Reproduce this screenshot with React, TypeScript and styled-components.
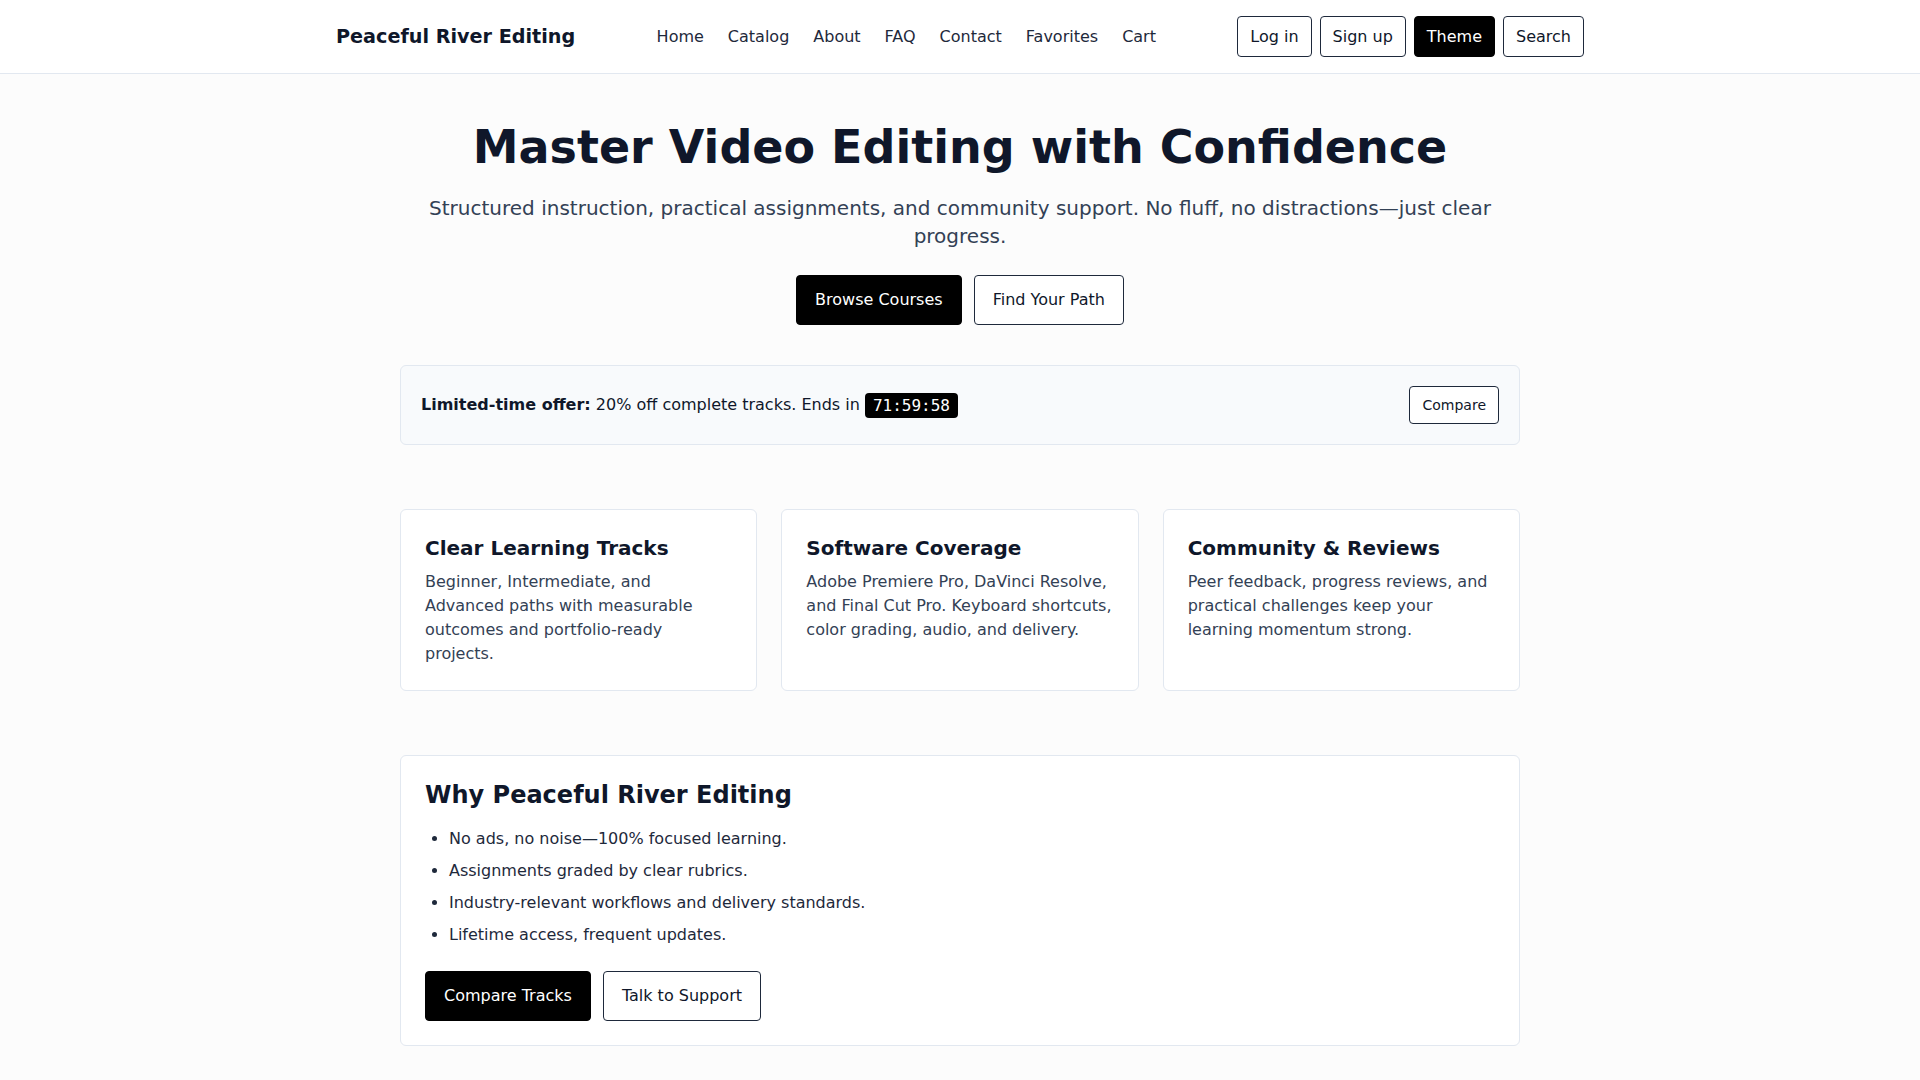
import React from "react";
import styled, { createGlobalStyle } from "styled-components";

const GlobalStyle = createGlobalStyle`
  * { box-sizing: border-box; }
  html, body { margin: 0; padding: 0; height: 100%; overflow: hidden; }
  body {
    background: #fcfcfc;
    color: #0f172a;
    font-family: "DejaVu Sans", "Noto Sans", sans-serif;
    font-size: 16px;
    line-height: 1.5;
  }
`;

const Page = styled.div`
  height: 100vh;
  overflow-y: scroll;
  background: #fcfcfc;

  &::-webkit-scrollbar {
    width: 15px;
    background: #f1f1f1;
  }
  &::-webkit-scrollbar-track {
    background: #f1f1f1;
  }
  &::-webkit-scrollbar-thumb {
    background: #c1c1c1;
    border: 2px solid #f1f1f1;
    border-radius: 0;
  }
  &::-webkit-scrollbar-button:single-button {
    display: block;
    height: 15px;
    background: #f1f1f1;
  }
`;

const Header = styled.header`
  background: #ffffff;
  border-bottom: 1px solid #e2e8f0;
`;

const HeaderInner = styled.div`
  max-width: 1280px;
  margin: 0 auto;
  padding: 16px 16px;
  display: flex;
  align-items: center;
  justify-content: space-between;
`;

const Logo = styled.a`
  font-size: 19.2px;
  font-weight: 700;
  color: #0f172a;
  text-decoration: none;
  line-height: 28px;
`;

const Nav = styled.nav`
  display: flex;
  align-items: center;
  gap: 24px;
`;

const NavLink = styled.a`
  color: #1e293b;
  text-decoration: none;
  font-size: 16px;
  line-height: 24px;
`;

const Actions = styled.div`
  display: flex;
  align-items: center;
  gap: 8px;
`;

const Button = styled.button<{ $primary?: boolean; $size?: "sm" | "md" | "lg" }>`
  font-family: inherit;
  font-size: ${(p) => (p.$size === "sm" ? "14px" : "16px")};
  line-height: ${(p) => (p.$size === "sm" ? "20px" : "24px")};
  padding: ${(p) =>
    p.$size === "sm" ? "8px 12px" : p.$size === "lg" ? "12px 18px" : "7.5px 12px"};
  border-radius: 4px;
  border: 1px solid ${(p) => (p.$primary ? "#000000" : "#1e293b")};
  background: ${(p) => (p.$primary ? "#000000" : "#ffffff")};
  color: ${(p) => (p.$primary ? "#ffffff" : "#0f172a")};
  cursor: pointer;
  white-space: nowrap;
`;

const Main = styled.main`
  max-width: 1120px;
  margin: 0 auto;
`;

const Hero = styled.section`
  padding: 46px 0 40px;
  text-align: center;
`;

const Title = styled.h1`
  margin: 0 0 20px;
  font-size: 46px;
  line-height: 54px;
  font-weight: 700;
  color: #0f172a;
`;

const Lead = styled.p`
  margin: 0 0 25px;
  font-size: 20px;
  line-height: 28px;
  color: #334155;
`;

const ButtonRow = styled.div<{ $center?: boolean }>`
  display: flex;
  gap: 12px;
  justify-content: ${(p) => (p.$center ? "center" : "flex-start")};
`;

const Offer = styled.div`
  display: flex;
  align-items: center;
  justify-content: space-between;
  padding: 20px;
  background: #f8fafc;
  border: 1px solid #e2e8f0;
  border-radius: 6px;
  color: #0f172a;
`;

const OfferText = styled.p`
  margin: 0;
  font-size: 16px;
  line-height: 24px;
`;

const Timer = styled.span`
  display: inline-block;
  background: #000000;
  color: #ffffff;
  font-family: "DejaVu Sans Mono", "Liberation Mono", monospace;
  font-size: 16px;
  line-height: 21px;
  padding: 2px 8px;
  border-radius: 4px;
  vertical-align: middle;
`;

const Features = styled.section`
  margin-top: 64px;
  display: grid;
  grid-template-columns: repeat(3, 1fr);
  gap: 24px;
`;

const Card = styled.article`
  background: #ffffff;
  border: 1px solid #e2e8f0;
  border-radius: 6px;
  padding: 24px;
`;

const CardTitle = styled.h3`
  margin: 0 0 8px;
  font-size: 20px;
  line-height: 28px;
  font-weight: 700;
  color: #0f172a;
`;

const CardText = styled.p`
  margin: 0;
  font-size: 16px;
  line-height: 24px;
  color: #334155;
`;

const Why = styled.section`
  margin-top: 64px;
  background: #ffffff;
  border: 1px solid #e2e8f0;
  border-radius: 6px;
  padding: 24px;
`;

const WhyTitle = styled.h2`
  margin: 0 0 16px;
  font-size: 24px;
  line-height: 31px;
  font-weight: 700;
  color: #0f172a;
`;

const List = styled.ul`
  margin: 0 0 24px;
  padding-left: 24px;
  display: flex;
  flex-direction: column;
  gap: 8px;
`;

const Item = styled.li`
  font-size: 16px;
  line-height: 24px;
  color: #1e293b;
`;

const Cta = styled.section`
  margin-top: 64px;
  padding: 64px 24px;
  text-align: center;
  background: #ffffff;
  border: 1px solid #e2e8f0;
  border-radius: 6px;
`;

const CtaTitle = styled.h2`
  margin: 0 0 12px;
  font-size: 24px;
  line-height: 31px;
  color: #0f172a;
`;

const Footer = styled.footer`
  margin-top: 64px;
  border-top: 1px solid #e2e8f0;
  background: #ffffff;
`;

const FooterInner = styled.div`
  max-width: 1280px;
  margin: 0 auto;
  padding: 48px 16px 80px;
  display: flex;
  justify-content: space-between;
  color: #475569;
  font-size: 14px;
`;

const features = [
  {
    title: "Clear Learning Tracks",
    text: "Beginner, Intermediate, and Advanced paths with measurable outcomes and portfolio-ready projects.",
  },
  {
    title: "Software Coverage",
    text: "Adobe Premiere Pro, DaVinci Resolve, and Final Cut Pro. Keyboard shortcuts, color grading, audio, and delivery.",
  },
  {
    title: "Community & Reviews",
    text: "Peer feedback, progress reviews, and practical challenges keep your learning momentum strong.",
  },
];

const reasons = [
  "No ads, no noise—100% focused learning.",
  "Assignments graded by clear rubrics.",
  "Industry-relevant workflows and delivery standards.",
  "Lifetime access, frequent updates.",
];

const navItems = ["Home", "Catalog", "About", "FAQ", "Contact", "Favorites", "Cart"];

export default function App() {
  return (
    <Page>
      <GlobalStyle />
      <Header>
        <HeaderInner>
          <Logo href="#">Peaceful River Editing</Logo>
          <Nav>
            {navItems.map((n) => (
              <NavLink key={n} href="#">
                {n}
              </NavLink>
            ))}
          </Nav>
          <Actions>
            <Button>Log in</Button>
            <Button>Sign up</Button>
            <Button $primary>Theme</Button>
            <Button>Search</Button>
          </Actions>
        </HeaderInner>
      </Header>
      <Main>
        <Hero>
          <Title>Master Video Editing with Confidence</Title>
          <Lead>
            Structured instruction, practical assignments, and community support. No fluff, no
            distractions—just clear progress.
          </Lead>
          <ButtonRow $center>
            <Button $primary $size="lg">Browse Courses</Button>
            <Button $size="lg">Find Your Path</Button>
          </ButtonRow>
        </Hero>
        <Offer>
          <OfferText>
            <strong>Limited-time offer:</strong> 20% off complete tracks. Ends in{" "}
            <Timer>71:59:58</Timer>
          </OfferText>
          <Button $size="sm">Compare</Button>
        </Offer>
        <Features>
          {features.map((f) => (
            <Card key={f.title}>
              <CardTitle>{f.title}</CardTitle>
              <CardText>{f.text}</CardText>
            </Card>
          ))}
        </Features>
        <Why>
          <WhyTitle>Why Peaceful River Editing</WhyTitle>
          <List>
            {reasons.map((r) => (
              <Item key={r}>{r}</Item>
            ))}
          </List>
          <ButtonRow>
            <Button $primary $size="lg">Compare Tracks</Button>
            <Button $size="lg">Talk to Support</Button>
          </ButtonRow>
        </Why>
        <Cta>
          <CtaTitle>Ready to start editing?</CtaTitle>
          <CardText>Pick a track and begin your first assignment today.</CardText>
        </Cta>
      </Main>
      <Footer>
        <FooterInner>
          <span>© Peaceful River Editing</span>
          <span>Privacy · Terms · Contact</span>
        </FooterInner>
      </Footer>
    </Page>
  );
}
